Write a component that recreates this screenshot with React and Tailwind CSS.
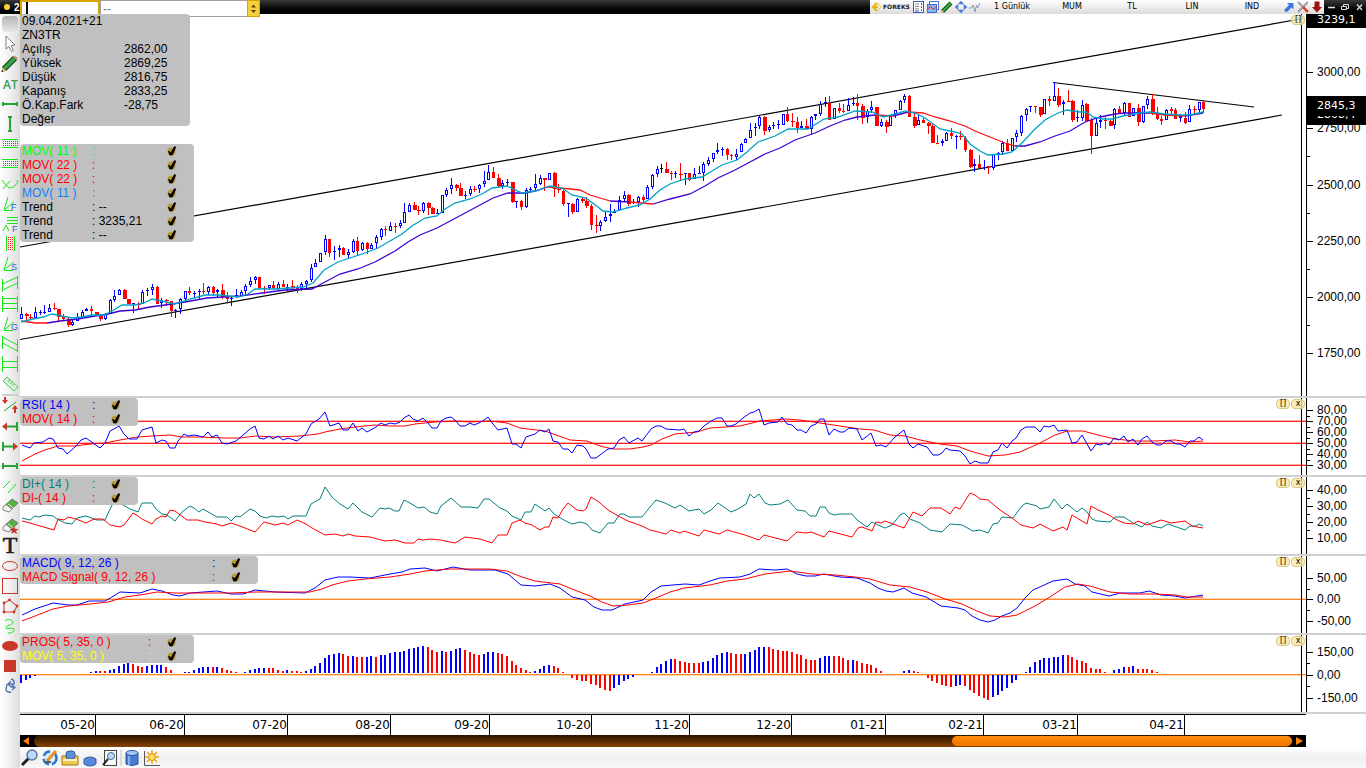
import React from 'react';

// --- CHART DATA ---
// one entry per day: direction (u = up, d = down, k = flat) then high, body top, body bottom, low
const CANDLES = `
u307,314,319,319 d313,314,316,321 d314,317,318,320 u307,312,318,318 u310,312,313,315 u305,312,313,314 u304,308,312,312 d303,308,309,310
d309,309,317,322 d314,317,319,321 d318,319,325,327 u320,322,325,326 u313,317,321,321 u310,312,317,318 u308,309,311,311 d306,309,311,315
d312,312,315,315 d316,316,319,321 u313,314,319,320 u299,300,314,314 u290,296,300,302 u289,290,295,295 d289,290,299,299 d299,299,304,304
u303,303,304,313 d302,304,305,309 u290,292,304,304 u288,290,291,296 u284,287,290,295 d286,287,304,304 u298,300,303,308 d299,300,301,306
d301,301,311,317 u309,310,311,318 u298,299,309,314 u291,291,299,302 d287,291,293,295 u291,293,294,298 u289,291,292,299 d283,291,292,294
u286,287,292,295 d286,287,293,296 u289,290,292,297 d284,290,297,299 d292,297,299,302 u296,298,299,306 u289,295,296,298 u290,292,296,296
u284,286,291,296 u277,281,285,287 u276,277,280,284 d277,277,288,289 d286,288,289,294 u285,285,288,290 d281,285,288,289 u282,284,289,290
d280,284,287,287 u284,287,288,291 d280,286,287,290 d285,287,290,293 u282,284,289,291 u280,281,284,289 u264,268,280,282 u259,263,267,267
u253,253,262,262 u235,239,252,255 d239,239,253,257 u246,251,252,260 u245,248,250,257 d247,248,255,255 u249,252,255,259 u239,241,252,253
d237,241,251,255 u242,243,250,251 d242,243,249,254 u243,245,249,249 u235,237,243,249 u228,229,237,240 d226,229,230,236 u222,226,231,231
d223,226,227,233 u220,223,226,228 u203,212,223,223 u203,205,212,212 d202,205,210,210 d206,210,211,215 u202,203,211,213 d202,203,208,215
d207,208,214,214 u209,213,214,214 u195,195,213,213 u188,190,195,197 u178,185,189,194 d184,185,188,191 d183,188,196,196 u191,195,196,199
u186,189,194,196 d186,189,190,192 u184,185,189,193 u171,181,184,187 u165,172,180,180 d167,172,178,178 d174,178,186,187 u180,183,186,189
u179,182,183,187 d182,182,202,203 u201,201,202,208 d200,201,207,210 u188,190,207,208 u187,189,190,192 u174,184,188,190 u175,178,184,185
d178,178,180,191 u173,173,180,180 d172,173,189,197 d184,189,190,193 d190,191,204,206 u203,203,204,217 d203,204,212,214 u198,199,212,212
d197,199,201,203 d197,201,206,208 d204,206,225,230 d215,225,226,233 u220,222,226,231 u212,217,221,222 u204,214,216,222 u209,211,213,213
u196,200,210,210 u191,195,199,201 d194,195,204,206 u199,202,203,204 u196,197,202,207 d195,197,200,202 u185,187,199,199 u174,175,187,189
u166,169,174,177 k164,168,169,173 d162,169,173,173 d171,173,174,180 u171,173,174,178 d163,174,175,181 u173,173,174,185 d173,173,180,181
u168,174,179,179 u166,173,174,174 u162,164,173,181 u157,160,164,166 u153,153,159,162 u143,150,152,154 u147,149,150,156 d148,149,155,160
d154,155,156,160 u149,154,157,160 u143,144,152,152 u138,139,143,143 u123,130,138,138 u123,127,128,136 u115,117,126,129 d116,117,131,135
u125,127,130,132 u122,125,126,129 u120,124,125,129 u114,114,125,125 d107,114,121,122 d113,121,122,127 d117,122,128,133 u121,126,128,128
d119,126,129,129 u116,117,129,134 u114,114,116,120 u101,104,114,116 u97,102,103,107 d96,103,120,120 u108,108,119,119 d103,108,111,113
d104,111,112,113 u98,105,111,111 u97,103,104,106 d94,103,106,120 d104,106,118,124 u109,111,117,123 u101,107,110,113 d107,107,126,126
u119,122,126,127 d120,122,127,133 u116,116,126,126 u110,110,114,118 u100,101,110,110 u94,96,100,103 d95,96,117,117 d112,117,126,128
u115,120,125,125 d118,120,123,123 d122,123,126,134 d123,126,143,143 d135,143,144,144 u139,141,143,146 u132,133,141,141 d128,133,136,139
u135,136,137,149 d131,136,137,140 d136,138,150,152 d149,150,167,168 u159,164,166,172 d155,164,168,168 u160,167,168,170 d166,166,167,174
u154,154,168,170 u152,153,154,160 u141,143,152,155 d139,143,151,151 u138,138,151,151 u130,133,137,142 u115,116,133,136 u108,109,115,121
u106,106,107,112 d106,106,107,113 d107,107,115,117 u99,99,114,114 d96,99,101,106 u82,96,101,101 d88,96,105,107 u100,102,104,115
d90,101,102,102 d100,101,120,122 u110,117,118,122 u100,105,118,121 d103,104,121,121 d118,120,136,154 u117,123,136,136 u115,120,122,128
d117,120,121,129 d120,121,126,126 u108,109,125,129 d106,109,113,113 u102,103,113,115 d103,103,117,117 u108,108,116,116 d104,108,122,126
u106,106,122,123 u96,99,105,109 d94,99,113,115 d107,113,119,120 d116,119,121,125 u109,110,120,120 d107,109,111,114 d108,110,119,119
u114,116,118,122 d112,118,123,124 u105,109,122,122 d106,109,110,113 u102,102,110,113 d101,102,109,113
`.trim().split(/\s+/);

const MOV_11 = '21,322 33,319 43,317 52,314 62,316 72,318 82,317 92,315 104,315 112,311 122,305 135,305 144,303 152,299 162,301 175,304 190,299 205,295 220,295 238,297 248,294 255,289 275,289 290,288 303,287 313,283 324,270 338,262 350,258 365,253 378,248 390,241 402,234 412,226 425,218 437,216 445,209 455,203 470,199 482,194 492,188 507,186 522,193 535,191 550,186 562,188 572,195 586,198 594,204 603,211 613,212 627,208 640,205 650,199 660,190 670,184 685,179 702,177 712,171 722,165 737,160 747,152 758,142 775,136 788,129 808,129 816,124 824,119 838,117 855,111 872,112 883,117 895,114 905,111 915,113 925,118 940,129 955,132 962,134 970,144 980,151 988,155 1003,154 1012,152 1022,143 1034,130 1045,120 1058,113 1067,110 1080,112 1086,112 1093,117 1103,119 1112,119 1123,116 1140,113 1150,112 1165,114 1180,115 1190,115 1203,112';

const MOV_22_UP = [
  '47,323 60,321 78,319 95,316 108,314 120,311 135,310 150,307 165,305 185,302 207,298 240,296 262,293 285,290 312,289 325,282 340,274 358,269 375,262 395,251 408,242 420,235 437,228 452,220 467,212 480,205 493,198 508,193 525,193 535,191 548,187',
  '610,201 630,202',
  '653,204 670,199 690,194 705,186 718,178 735,170 750,162 765,154 780,148 795,140 815,133 830,126 845,120 857,117 875,115',
  '893,116 908,112',
  '1015,146 1025,146 1040,142 1055,136 1070,131 1085,122 1100,117 1115,114 1125,113 1150,113',
  '1185,116 1203,113',
];

const MOV_22_DOWN = [
  '21,321 36,323 47,323',
  '548,187 560,188 580,190 590,195 610,201',
  '630,202 653,204',
  '875,115 893,116',
  '908,112 923,113 935,117 950,121 965,126 975,131 990,137 1005,143 1015,146',
  '1150,113 1165,115 1185,116',
];

const RSI = '22,445 30,448 34,443 43,442 49,438 53,439 58,448 63,449 67,454 75,447 81,440 86,438 93,443 100,448 105,443 110,431 114,429 119,426 124,434 129,439 137,439 142,430 152,427 156,443 162,440 166,441 170,448 175,448 178,441 184,434 188,436 194,435 199,436 203,437 208,432 212,437 217,435 222,443 227,444 236,441 242,436 250,429 255,426 259,438 264,439 269,436 273,439 278,436 283,440 288,438 297,441 306,434 311,424 319,419 325,412 330,426 339,423 343,430 348,430 353,423 358,431 362,428 367,432 376,427 381,423 385,425 390,423 395,424 400,422 404,418 409,415 413,419 418,421 423,418 428,423 432,428 437,428 441,421 446,418 451,417 455,420 460,426 465,426 470,423 474,425 479,423 484,420 488,417 493,424 498,430 507,428 512,444 516,444 521,448 526,437 535,434 540,430 545,432 549,429 553,441 558,442 563,449 568,449 572,453 577,445 583,446 586,449 591,458 596,458 604,452 608,449 614,448 619,440 624,437 629,443 638,438 642,441 651,429 656,426 661,426 666,429 680,430 684,429 689,436 694,432 699,431 704,426 711,421 717,418 722,418 727,426 731,426 736,424 743,418 750,413 754,412 759,409 764,425 769,423 778,422 782,417 787,424 792,425 797,430 801,430 806,433 811,426 816,424 820,419 824,419 829,435 834,429 840,432 844,432 849,428 857,429 862,440 866,437 871,433 876,446 881,445 886,447 895,437 904,430 909,444 913,448 918,444 927,447 933,455 938,455 942,453 946,448 950,450 960,451 965,456 970,464 975,461 980,463 988,463 993,452 998,450 1002,443 1007,448 1012,441 1016,438 1021,430 1026,427 1035,427 1040,432 1044,426 1049,427 1054,425 1058,431 1067,430 1072,443 1077,442 1082,435 1091,451 1096,444 1100,445 1105,443 1109,445 1114,438 1119,440 1124,436 1128,442 1133,439 1138,445 1142,439 1147,436 1152,442 1157,445 1161,445 1166,441 1171,441 1176,444 1180,444 1185,447 1190,441 1194,441 1199,437 1203,440';
const RSI_MOV = '22,461 35,454 45,450 58,446 75,446 90,444 105,443 120,440 137,437 152,436 170,435 182,437 200,437 225,438 240,438 255,436 275,437 300,436 318,434 325,432 340,429 355,427 375,425 390,426 405,426 415,424 435,422 455,421 470,422 490,421 507,423 520,428 545,431 570,440 587,441 600,446 613,449 630,449 643,447 651,445 662,439 675,434 697,432 710,428 740,426 760,421 785,419 800,420 820,423 840,426 860,429 874,430 890,435 905,436 920,440 940,444 957,446 970,451 988,456 1005,455 1020,452 1040,443 1055,435 1067,431 1083,431 1098,435 1115,439 1135,441 1155,441 1175,440 1190,442 1203,441';

const DI_PLUS = '22,518 30,520 35,516 39,517 45,515 53,516 57,519 65,523 72,524 77,518 86,516 97,520 105,520 112,505 118,502 130,509 138,512 142,503 152,503 156,509 162,514 167,515 175,521 182,512 190,506 194,508 199,512 203,509 210,513 217,517 227,517 231,521 236,516 240,517 250,509 255,511 260,516 266,518 272,516 278,517 284,516 288,519 293,516 306,516 311,504 320,499 325,487 332,497 340,504 348,509 353,503 362,512 372,517 380,508 385,509 389,508 395,511 399,511 404,500 410,503 418,508 424,507 430,512 437,514 441,506 446,502 451,498 461,507 470,507 478,508 484,499 489,499 500,508 507,511 512,516 521,520 525,512 531,512 535,504 545,511 549,508 554,514 562,519 572,524 580,522 587,524 592,530 600,533 608,523 614,523 620,514 624,514 629,517 642,517 650,507 656,500 665,503 675,508 680,505 689,511 699,509 704,514 711,510 718,503 731,512 738,509 746,504 750,494 754,498 759,494 765,503 770,505 780,504 788,500 797,510 805,511 810,516 816,516 820,507 825,507 829,513 834,515 840,514 852,514 857,520 867,527 872,522 878,525 885,528 892,525 900,515 904,513 910,519 920,523 930,530 942,532 950,524 962,525 973,531 980,530 988,533 993,524 998,523 1002,517 1013,518 1022,506 1026,503 1037,506 1040,509 1049,507 1054,499 1062,509 1067,504 1077,512 1082,508 1087,512 1092,519 1097,521 1110,522 1115,517 1124,517 1133,523 1142,527 1147,522 1152,526 1161,528 1168,524 1185,530 1190,526 1196,526 1199,524 1203,526';
const DI_MINUS = '22,521 30,523 40,526 54,530 58,519 64,520 68,517 76,519 86,523 94,519 103,519 110,525 120,527 124,525 133,513 138,516 142,519 152,524 156,519 162,516 166,517 170,510 175,511 187,520 198,520 205,522 217,524 222,526 231,523 240,526 255,532 264,522 275,525 283,523 288,525 297,520 306,524 312,528 325,535 335,534 343,536 348,534 355,536 370,537 385,541 395,540 405,543 414,543 418,539 423,540 430,539 440,540 455,543 465,537 480,539 492,543 498,535 507,535 512,523 520,520 525,523 532,525 540,530 545,527 549,527 553,517 558,518 563,509 568,503 577,510 583,511 586,509 591,497 599,502 608,510 620,517 628,521 642,526 650,530 666,534 671,530 680,533 684,531 699,536 704,530 719,534 727,530 745,535 759,540 764,535 787,541 797,532 806,533 811,532 824,537 829,531 852,537 858,528 862,527 872,531 876,522 881,523 885,521 904,528 913,512 922,516 930,508 941,508 950,514 955,507 960,509 970,493 975,495 980,499 988,500 1000,510 1012,518 1021,525 1033,528 1040,524 1053,531 1063,527 1067,530 1072,515 1087,524 1091,506 1096,509 1109,515 1115,519 1124,523 1133,524 1138,521 1147,525 1161,520 1171,523 1185,521 1192,526 1203,528';

const MACD = '22,615 35,609 53,603 68,605 77,605 89,601 105,601 112,597 120,592 140,593 152,589 162,591 173,595 180,596 190,593 217,591 231,594 243,594 255,590 275,592 305,593 315,588 325,580 338,577 350,577 370,578 390,574 402,572 410,569 425,568 437,571 453,567 470,570 495,570 508,574 515,580 521,585 535,586 550,584 560,588 572,597 585,600 594,607 602,610 612,610 625,604 643,600 651,592 661,586 685,584 699,585 710,581 720,578 740,577 750,574 759,569 775,570 787,569 797,574 806,576 815,576 824,574 840,577 857,578 870,583 878,588 886,591 893,592 904,588 912,593 926,597 941,606 958,608 965,610 972,616 980,620 988,622 995,620 1002,616 1010,613 1017,608 1025,598 1033,590 1042,586 1053,581 1067,579 1075,584 1085,586 1092,592 1109,596 1120,593 1140,593 1149,591 1161,595 1175,596 1185,598 1203,595';
const MACD_SIGNAL = '22,621 35,616 53,609 68,606 90,604 108,602 125,597 140,595 157,592 175,593 200,593 230,593 255,592 285,592 310,592 322,589 332,585 348,581 365,579 390,577 410,574 425,571 450,569 470,569 490,569 507,571 522,577 535,581 560,584 572,589 590,596 602,602 613,606 628,605 643,603 656,598 670,592 684,588 710,585 727,581 745,579 765,574 790,571 812,574 835,575 855,577 870,579 890,585 910,587 927,592 945,599 962,604 977,611 990,616 1005,617 1017,615 1035,606 1050,597 1065,587 1078,584 1090,586 1110,592 1130,594 1155,594 1175,595 1187,597 1203,597';

// price oscillator: b = rising bar, r = falling bar, 0 = no bar
const PROS = `
b-8 b-5 b-3 b-1 0 0 0 0 0 0 0 0 0 0 0 b1 b2 r2 r2 b3 b4 b7 b9 b10 r9 r7 r6 b7 b8 b8 b8 r6 r3 0 0 b1 b1 b3 b5 b6 b6 r6 b6 r5 r3 r2 r1 0
b1 b3 b4 b5 b5 r5 r5 r3 r2 b3 r2 r2 r1 b2 b4 b7 b10 b15 b18 b19 b20 r19 r17 b17 r16 r16 b16 b17 r16 b18 b18 b20 b21 b21 b22 b24 b25 b26 b27
r26 r23 r21 b22 r21 b22 b24 b25 r23 r21 r19 r18 b19 b21 b21 r20 r19 r17 r12 r8 r5 r3 r1 b2 b4 b7 b8 r7 r5 r1 0 r-3 r-5 r-6 r-6 r-9 r-10 r-13
r-15 r-16 b-13 b-10 b-6 b-4 b-2 0 0 0 b1 b6 b9 b12 b14 r14 r12 r11 r10 r10 r10 b11 b12 b15 b18 b20 b21 r20 r19 r19 b19 b21 b23 b26 b26 r26
r24 r23 r22 r22 r21 r19 r18 r14 r13 r13 b15 b17 b17 r17 r17 r15 r13 b13 r12 r10 r9 r8 r5 r2 0 0 0 0 b2 b3 r2 r1 0 r-3 r-6 r-8 r-10 r-11 r-12
b-11 b-10 r-11 r-15 r-18 r-21 r-23 r-25 b-22 b-20 b-16 b-13 b-8 b-5 0 b1 b6 b11 b13 b15 b15 b16 b16 b18 r18 r16 r13 r12 r10 r5 r4 r4 r1 0
b3 b4 b6 r6 b7 r4 r4 r4 r3 r1
`.trim().split(/\s+/);

const barX = (i) => Math.round(21 + i * 4.673);

// --- SMALL PARTS ---
function CheckMark({ label }) {
  return (
    <label className="flex h-3.5 w-5 items-center justify-center">
      <input type="checkbox" defaultChecked aria-label={label} className="peer sr-only" />
      <svg viewBox="0 0 10 10" className="hidden h-2.5 w-2.5 peer-checked:block">
        <circle cx="4.5" cy="5.5" r="4" fill="#b8983a" />
        <path d="M1.5 5.2 L4 6.8 L7.5 0.5 L8.8 1.2 L5.2 9 L2.8 9 Z" fill="#000" stroke="#000" strokeWidth="0.8" />
      </svg>
    </label>
  );
}

function Legend({ rows, className, cols }) {
  return (
    <div className={`absolute left-0 z-10 rounded bg-[#c0c0c0] pl-0.5 text-xs leading-3.5 ${className}`}>
      {rows.map(([name, color, value], i) => (
        <div key={i} className={`grid h-3.5 ${cols} ${color}`}>
          <span className="whitespace-nowrap">{name}</span>
          <span className="whitespace-nowrap">: {value}</span>
          <CheckMark label={name} />
        </div>
      ))}
    </div>
  );
}

function PanelButton({ children, label }) {
  return (
    <button aria-label={label} className="flex h-2.5 w-3.5 items-center justify-center rounded border border-[#d8c880] bg-[#f8e8a8]/80 font-[DejaVu_Sans,sans-serif] text-[8px] leading-none text-black">
      {children}
    </button>
  );
}

function Axis({ top, height, ticks, minor, children }) {
  const pct = (y) => `${((y - top) / height) * 100}%`;
  return (
    <div className="relative w-[60px] shrink-0 overflow-hidden border-l border-black">
      <svg className="absolute inset-0 h-full w-full" fontSize="12" fill="#000" stroke="none">
        {ticks.map(([y, label]) => (
          <g key={label}>
            <rect x="0" y={pct(y)} width="6" height="1" />
            <text x="10" y={pct(y)} dy="4">{label}</text>
          </g>
        ))}
        {minor.map((y) => <rect key={y} x="0" y={pct(y)} width="3" height="1" />)}
      </svg>
      {children}
    </div>
  );
}

function Plot({ top, height, children }) {
  return (
    <svg viewBox={`20 ${top} 1286 ${height}`} preserveAspectRatio="none" className="absolute inset-0 h-full w-full" fill="none">
      {children}
      <rect x="1301" y={top} width="1" height={height} fill="#000" />
    </svg>
  );
}

function Level({ y, color, glow = -1 }) {
  return (
    <>
      <rect x="20" y={y} width="1286" height="1" fill={color} />
      <rect x="20" y={y + glow} width="1286" height="1" fill={color} opacity="0.35" />
    </>
  );
}

function IndicatorPanel({ top, rows, legend, cols, ticks, minor, children }) {
  return (
    <section className="flex h-[79px] shrink-0 border-t-2 border-[#d0d0d0]">
      <div className="relative min-w-0 flex-1">
        <Plot top={top} height={77}>{children}</Plot>
        <Legend rows={rows} className={`top-0 ${legend}`} cols={cols} />
        <div className="absolute top-px right-px flex gap-px">
          <PanelButton label="Büyüt">[]</PanelButton>
          <PanelButton label="Kapat">x</PanelButton>
        </div>
      </div>
      <Axis top={top} height={77} ticks={ticks} minor={minor} />
    </section>
  );
}

// --- LEFT TOOLBAR ---
const LIME = '#19e619';
const GREEN = '#22a832';
const RED = '#c8372a';

const Dots = ({ x, y, cols, rows }) => (
  <g fill="#ff2020">
    {Array.from({ length: cols * rows }, (_, i) => (
      <rect key={i} x={x + (i % cols) * 2} y={y + Math.floor(i / cols) * 2} width="1" height="1" />
    ))}
  </g>
);

const Fan = ({ letter }) => (
  <>
    <path d="M8 3 L4 16 L14 8 M4 16.5 H13" stroke={LIME} />
    <text x="11" y="16" fontSize="9" fill="#2a5fd0">{letter}</text>
  </>
);

const Eraser = () => (
  <>
    <path d="M3 11 L12 3 L18 7 L9 16 Z" fill="#58b040" stroke="#777" />
    <path d="M3 11 L6 8.5 L12 13 L9 16 L3 14 Z" fill="#f4f4f4" stroke="#888" />
    <path d="M8 8 L14 12" stroke="#d8f0d0" />
  </>
);

const TOOLS = [
  ['İmleç', <path d="M6 2 V15 L9 12.5 L11.5 17.5 L13.5 16.5 L11.2 11.6 L15 11 Z" fill="#fff" stroke="#808080" />],
  ['Kalem', <><path d="M4 15 L15 4" stroke="#0d4d12" strokeWidth="6" /><path d="M4.5 14.5 L14.5 4.5" stroke="#3aa445" strokeWidth="3.5" /><path d="M1.5 18 L2.5 13 L6.5 17 Z" fill="#e8b080" /><path d="M1.5 18 L2 16 L3.5 17.5 Z" fill="#000" /><path d="M13.5 3 L15 1.5 L18 4.5 L16.5 6 Z" fill="#d88888" /></>],
  ['Metin', <text x="3" y="15" fontSize="12" fontWeight="600" fontFamily="Open Sans" fill="#3c9c50">AT</text>],
  ['Yatay', <path d="M2 10 H18 M3 8 V12 M17 8 V12" stroke={GREEN} strokeWidth="2" />],
  ['Dikey', <path d="M10 3 V17 M8 3 H12 M8 17 H12" stroke={GREEN} strokeWidth="2" />],
  ['Bant', <><path d="M2 5.5 H18 M2 13.5 H18" stroke={LIME} /><Dots x={3} y={7} cols={8} rows={3} /></>],
  ['Bant 2', <><path d="M2 5.5 H18 M2 13.5 H18" stroke={LIME} /><Dots x={3} y={7} cols={8} rows={3} /></>],
  ['Yay', <path d="M2 6 Q5 11 9 14 M3 15 L10 7 M9 14 Q16 14 18 6" stroke={LIME} />],
  ['Fibonacci yelpaze', <Fan letter="F" />],
  ['Fibonacci seviye', <><path d="M7 3.5 H18 M7 6.5 H18 M7 9.5 H18 M3 17 L6 11 L9 17" stroke={LIME} /><text x="12" y="18" fontSize="9" fill="#2a5fd0">F</text></>],
  ['Zaman bandı', <><path d="M6.5 2 V17 M14.5 2 V17" stroke={LIME} /><Dots x={8} y={3} cols={3} rows={7} /></>],
  ['Hız çizgisi', <Fan letter="S" />],
  ['Kanal', <path d="M2.5 5 V18 M17.5 2 V15 M2.5 10 L17.5 3 M2.5 16 L17.5 9" stroke={LIME} />],
  ['Izgara', <path d="M2.5 2 V18 M17.5 2 V18 M2.5 4.5 H17.5 M2.5 9.5 H17.5 M2.5 14.5 H17.5" stroke={LIME} />],
  ['Gann', <Fan letter="G" />],
  ['Ters kanal', <path d="M2.5 2 V15 M17.5 5 V18 M2.5 3 L17.5 11 M2.5 9 L17.5 17" stroke={LIME} />],
  ['Aralık', <path d="M2.5 2 V18 M17.5 2 V18 M2.5 7.5 H17.5 M2.5 13.5 H17.5" stroke={LIME} />],
  ['Cetvel', <path d="M3 7 L7 3 L18 13 L14 17 Z M8 8 L10 6 M10 10 L12 8 M12 12 L14 10" fill="#d8f4d8" stroke="#4cc45c" />],
];

const TOOLS_2 = [
  ['Sinyal', <><path d="M4 15 L16 6" stroke={GREEN} /><path d="M5 1 V5 M15 17 V13" stroke={RED} strokeWidth="2" /><path d="M2 4 H8 L5 8 Z M12 13 H18 L15 9 Z" fill={RED} /></>],
  ['Sola uzat', <><path d="M7 10.5 H17 M17 6 V15" stroke={GREEN} strokeWidth="2" /><path d="M2 10.5 L7 6.5 V14.5 Z" fill={RED} /></>],
  ['Sağa uzat', <><path d="M3 10.5 H13 M3 6 V15" stroke={GREEN} strokeWidth="2" /><path d="M18 10.5 L13 6.5 V14.5 Z" fill={RED} /></>],
  ['Parça', <path d="M3 10 H17 M3 7 V13 M17 7 V13" stroke={GREEN} strokeWidth="2" />],
  ['Paralel', <path d="M3 12 L10 5 M8 17 L16 8" stroke={LIME} />],
  ['Sil', <Eraser />],
  ['Tümünü sil', <><Eraser /><path d="M14 10 L15.3 13 L18.5 13 L16 15 L17 18 L14 16.2 L11 18 L12 15 L9.5 13 L12.7 13 Z" fill={RED} /></>],
  ['Yazı', <text x="10" y="17" textAnchor="middle" fontSize="24" fontFamily="Liberation Serif" stroke="#222" strokeWidth="0.6" fill="#222">T</text>],
  ['Elips', <ellipse cx="10" cy="10" rx="7.5" ry="4.5" stroke={RED} />],
  ['Dikdörtgen', <rect x="2.5" y="2.5" width="15" height="15" stroke={RED} />],
  ['Çokgen', <><path d="M4 7 L9.5 4 L17 10 L14 16 L4 16 Z" stroke={RED} /><g fill={RED}><circle cx="4" cy="7" r="1.4" /><circle cx="9.5" cy="4" r="1.4" /><circle cx="17" cy="10" r="1.4" /><circle cx="14" cy="16" r="1.4" /><circle cx="4" cy="16" r="1.4" /></g></>],
  ['Serbest', <path d="M5 5 C8 2 14 4 13 7 C12 9 6 9 6 12 C6 14 12 11 14 13 C15 15 12 17 8 17" stroke={LIME} />],
  ['Dolu elips', <ellipse cx="10" cy="10" rx="8" ry="5" fill={RED} />],
  ['Dolu kare', <rect x="4" y="4" width="12" height="12" fill={RED} />],
  ['Yenile', <path d="M11 3 Q15 4 14 8 H8 M11 5 L8 8 L11 11 M7 8 L6 14 Q7 17 11 16 M11 11 H15 M12 9 L15 11.5 L12 14" stroke="#4a70b0" strokeWidth="1.3" />],
];

function Tool({ label, icon }) {
  return (
    <button aria-label={label} className="h-5 w-5 shrink-0">
      <svg viewBox="0 0 20 20" className="h-5 w-5 overflow-visible" fill="none">{icon}</svg>
    </button>
  );
}

function LeftToolbar() {
  return (
    <nav className="flex w-5 shrink-0 flex-col bg-linear-to-r from-white via-[#f0f0f0] to-[#dcdcdc]">
      <div className="flex h-5 shrink-0 items-center justify-center">
        <div className="h-4 w-4 rounded bg-linear-to-b from-[#b4b4b4] to-[#e8e8e8]" />
      </div>
      {TOOLS.map(([label, icon]) => <Tool key={label} label={label} icon={icon} />)}
      <hr className="mx-0.5 h-0.5 shrink-0 border-0 bg-[#cfcfcf]" />
      {TOOLS_2.map(([label, icon]) => <Tool key={label} label={label} icon={icon} />)}
    </nav>
  );
}

// --- TOP BAR ---
const HEADER_ICONS = [
  ['Tablo', <><rect x="1.5" y="1.5" width="10" height="11" fill="#fff" stroke="#3060c0" /><path d="M3 4 H7 M3 6.5 H7 M3 9 H7" stroke="#888" /><path d="M9.5 3 V5 M9.5 6 V8" stroke="#d03030" /><path d="M9.5 9 V11 M3 11 H7" stroke="#3060c0" /></>],
  ['Grafik', <><rect x="3.5" y="1.5" width="9" height="8" fill="#fff" stroke="#4070d0" /><rect x="1.5" y="4.5" width="9" height="8" fill="#8ab0f0" stroke="#4070d0" /><path d="M2 9 Q4 5 6 8 T11 6" stroke="#d03030" /></>],
  ['Çiz', <><path d="M2.5 11.5 L11 3" stroke="#0d4d12" strokeWidth="4" /><path d="M3 11 L11 3" stroke="#3ab045" strokeWidth="2" /><path d="M1 13 L2 10 L4 12 Z" fill="#e8b080" /></>],
  ['Taşı', <path d="M7 1 L9.5 4 H4.5 Z M7 13 L9.5 10 H4.5 Z M1 7 L4 4.5 V9.5 Z M13 7 L10 4.5 V9.5 Z" fill="#5088e0" stroke="#3060c0" strokeWidth="0.5" />],
  ['Sinyal', <path d="M1 8 H3.5 L5 5 L7 12 L8.5 5 L9.5 8 L12 3" stroke="#8098b8" />],
];

const RIGHT_ICONS = [
  ['Ayır', <path d="M2 10 L7 5 L5 3 H11.5 V9.5 L9.5 7.5 L4.5 12.5 Z" fill="#3a78e0" />],
  ['Ayarlar', <><path d="M2 2 L8 8 M12 2 L2 12" stroke="#999" strokeWidth="1.8" /><path d="M7 7 L12 12" stroke="#e04030" strokeWidth="2.5" /></>],
  ['İndir', <path d="M4.5 1.5 H9.5 V7 H12 L7 12.5 L2 7 H4.5 Z" fill="#a01010" />],
];

function HeaderIcon({ label, icon }) {
  return (
    <button aria-label={label} className="h-3.5 w-3.5">
      <svg viewBox="0 0 14 14" className="h-3.5 w-3.5" fill="none">{icon}</svg>
    </button>
  );
}

function TopBar() {
  return (
    <header className="flex h-3.5 shrink-0 justify-between bg-linear-to-b from-[#3a3a3a] to-black">
      <div className="flex h-[17px]">
        <div className="flex h-3.5 w-5 items-center gap-1 overflow-hidden pl-1 text-[10px] font-bold text-white">
          <span className="h-1.5 w-1.5 shrink-0 rounded-full bg-[#ffd030]" />
          2
        </div>
        <div className="relative">
          <input aria-label="Sembol" className="block h-[17px] w-20 border-2 border-[#d9a300] bg-white px-1 text-xs outline-none" />
          <span className="absolute top-0.5 left-1.5 h-3 w-0.5 bg-black" />
        </div>
        <div className="relative">
          <select aria-label="Şablon" className="block h-[17px] w-40 appearance-none border border-[#a8a0a0] bg-white pl-0.5 text-xs leading-3.5 text-gray-500">
            <option>--</option>
          </select>
          <svg viewBox="0 0 13 17" className="pointer-events-none absolute top-0 right-0 h-[17px] w-[13px]">
            <rect x="0.5" y="0.5" width="12" height="16" fill="#f6cf3c" stroke="#d9a300" />
            <path d="M4 7.5 L6.5 4.5 L9 7.5 Z M4 10 L6.5 13 L9 10 Z" fill="#5a4200" />
          </svg>
        </div>
      </div>
      <div className="flex font-[DejaVu_Sans,sans-serif] text-[8px] leading-3.5 text-black">
        <div className="flex bg-linear-to-b from-white to-[#dcdcdc]">
          <svg viewBox="0 0 42 14" className="h-3.5 w-[42px]" fill="none">
            <path d="M7 3 L3 7 L7 11 M3 7 H8" stroke="#f0b400" strokeWidth="2" />
            <path d="M8 3.5 L11 7 L8 10.5" stroke="#f0b400" strokeWidth="1" strokeDasharray="2 1" />
            <text x="13" y="9" fontSize="6" fontWeight="bold" fill="#222">FOREKS</text>
          </svg>
          {HEADER_ICONS.map(([label, icon]) => <HeaderIcon key={label} label={label} icon={icon} />)}
          {['1 Günlük', 'MUM', 'TL', 'LIN', 'IND'].map((item) => (
            <button key={item} className="w-15">{item}</button>
          ))}
          {RIGHT_ICONS.map(([label, icon]) => <HeaderIcon key={label} label={label} icon={icon} />)}
        </div>
        <HeaderIcon label="Küçült" icon={<path d="M4 7.5 H11" stroke="#ddd" strokeWidth="1.5" />} />
        <HeaderIcon label="Pencere" icon={<path d="M3.5 6.5 H8.5 V9.5 H3.5 Z M5.5 6 V4.5 H10.5 V8.5 H9" stroke="#ddd" />} />
        <HeaderIcon label="Kapat" icon={<path d="M5 4.5 L10 10 M10 4.5 L5 10" stroke="#ddd" strokeWidth="1.3" />} />
      </div>
    </header>
  );
}

// --- PRICE CHART ---
function Candle({ code, x }) {
  const [high, top, bottom, low] = code.slice(1).split(',').map(Number);
  const color = { u: '#0000ff', d: '#ff0000', k: '#000000' }[code[0]];
  const h = Math.max(bottom - top, 1);
  return (
    <g fill={color}>
      <rect x={x} y={high} width="1" height={Math.max(low - high, 1)} />
      <rect x={x - 1} y={top} width={code[0] === 'd' ? 4 - (x % 2) : 3} height={h} />
      {code[0] === 'u' && h > 2 && <rect x={x} y={top + 1} width="1" height={h - 2} fill="#fff" />}
    </g>
  );
}

function PricePanel() {
  const prices = [
    ['Açılış', '2862,00'],
    ['Yüksek', '2869,25'],
    ['Düşük', '2816,75'],
    ['Kapanış', '2833,25'],
    ['Ö.Kap.Fark', '-28,75'],
    ['Değer', ''],
  ];
  return (
    <section className="flex min-h-60 flex-1">
      <div className="relative min-w-0 flex-1">
        <Plot top={14} height={382}>
          <g stroke="#000" strokeWidth="1.2">
            <path d="M20 247 L1303 18.5 M20 339.5 L1282 115 M1053 82.5 L1254 107" />
          </g>
          <g shapeRendering="crispEdges">
            {CANDLES.map((code, i) => <Candle key={i} code={code} x={barX(i)} />)}
          </g>
          <g strokeWidth="1.3">
            {MOV_22_UP.map((p) => <polyline key={p} points={p} stroke="#4000d0" />)}
            {MOV_22_DOWN.map((p) => <polyline key={p} points={p} stroke="#ff1010" />)}
            <polyline points={MOV_11} stroke="#00a0c8" />
          </g>
        </Plot>

        <div className="absolute top-0 left-0 z-10 w-[170px] rounded bg-[#c0c0c0] pl-0.5 text-xs leading-3.5">
          <div>09.04.2021+21</div>
          <div>ZN3TR</div>
          <table>
            <tbody>
              {prices.map(([name, value]) => (
                <tr key={name} className="h-3.5">
                  <th scope="row" className="w-[102px] p-0 text-left font-normal">{name}</th>
                  <td className="p-0">{value}</td>
                </tr>
              ))}
            </tbody>
          </table>
        </div>

        <Legend
          className="top-[130px] w-[174px]"
          cols="grid-cols-[70px_70px_20px]"
          rows={[
            ['MOV( 11 )', 'text-[#00ff00]'],
            ['MOV( 22 )', 'text-[#ff0000]'],
            ['MOV( 22 )', 'text-[#ff0000]'],
            ['MOV( 11 )', 'text-[#1080ff]'],
            ['Trend', 'text-black', '--'],
            ['Trend', 'text-black', '3235,21'],
            ['Trend', 'text-black', '--'],
          ]}
        />
        <div className="absolute top-px right-px">
          <PanelButton label="Büyüt">[]</PanelButton>
        </div>
      </div>
      <Axis
        top={14}
        height={382}
        ticks={[[72, '3000,00'], [128, '2750,00'], [185, '2500,00'], [241, '2250,00'], [297, '2000,00'], [353, '1750,00']]}
        minor={[156, 213, 269, 325]}
      >
        <div className="absolute inset-x-0 top-0 h-full font-[DejaVu_Sans,sans-serif] text-[11px] leading-5 text-white">
          <div className="absolute inset-x-0 top-0 h-3.5 bg-black pl-2.5 leading-3">3239,1</div>
          <div className="absolute inset-x-0 top-[91px] bg-black pl-2.5">2808,4</div>
          <div className="absolute inset-x-0 top-[82px] bg-black pl-2.5">2845,3</div>
        </div>
      </Axis>
    </section>
  );
}

// --- BOTTOM ---
const MONTHS = ['05-20', '06-20', '07-20', '08-20', '09-20', '10-20', '11-20', '12-20', '01-21', '02-21', '03-21', '04-21'];

function TimeAxis() {
  return (
    <div className="flex h-[23px] shrink-0 border-t-2 border-[#d0d0d0]">
      <div className="grid flex-1 grid-cols-[76fr_89fr_103fr_103fr_99fr_102fr_98fr_102fr_94fr_98fr_94fr_107fr_121fr] border-t border-black pb-px font-[DejaVu_Sans,sans-serif] text-xs leading-5">
        {MONTHS.map((m) => <div key={m} className="border-r border-black text-right">{m}</div>)}
      </div>
      <div className="w-[60px]" />
    </div>
  );
}

function ScrollBar() {
  return (
    <div className="flex h-3 shrink-0 pr-[60px]">
      <div className="flex flex-1 bg-black">
        <button aria-label="Geri" className="w-3.5">
          <svg viewBox="0 0 14 12" className="h-3 w-3.5"><path d="M3 6 L9 2 V10 Z" fill="#ff8000" /></svg>
        </button>
        <div className="flex flex-1 justify-end rounded-full bg-linear-to-b from-[#2a1400] to-[#8a4400]">
          <div className="my-px w-[27%] rounded-md bg-linear-to-b from-[#ff8c10] to-[#ee7400]" />
        </div>
        <button aria-label="İleri" className="w-3.5">
          <svg viewBox="0 0 14 12" className="h-3 w-3.5"><path d="M11 6 L4 2 V10 Z" fill="#ff8000" /></svg>
        </button>
      </div>
    </div>
  );
}

const BOTTOM_TOOLS = [
  ['Ara', <><path d="M2 17 L9 10" stroke="#222" strokeWidth="3" /><circle cx="12" cy="7" r="5" fill="#b8dcff" stroke="#607898" strokeWidth="1.5" /></>],
  ['Yenile', <><circle cx="10" cy="10" r="6.5" fill="#d8ecff" stroke="#2a78c8" strokeWidth="2.5" strokeDasharray="8 3" /><path d="M7 13 L16 3" stroke="#e89020" strokeWidth="3" /><path d="M6 14 H11" stroke="#333" strokeWidth="1.5" /></>],
  ['Aç', <><path d="M2 8 H18 V17 H2 Z" fill="#f0c850" stroke="#a07818" /><rect x="6" y="3" width="9" height="8" rx="3" fill="#6090d8" stroke="#3058a0" /><path d="M3 12 H17" stroke="#fff4c0" strokeWidth="2" /></>],
  ['Kaydet', <path d="M4 11 Q10 7 16 11 V16 Q10 20 4 16 Z" fill="#5888d8" stroke="#3058a8" />],
  ['İncele', <><rect x="4.5" y="2.5" width="12" height="15" fill="#f8f8f8" stroke="#444" /><path d="M3 17 L8 11" stroke="#222" strokeWidth="2" /><circle cx="11" cy="8" r="3.5" fill="#b8dcff" stroke="#506888" /></>],
  ['Veri', <><path d="M4 5 V16 Q10 19 16 16 V5" fill="#4a7cd0" stroke="#2a50a0" /><ellipse cx="10" cy="5" rx="6" ry="2.5" fill="#a8c8f4" stroke="#2a50a0" /><path d="M7 8 V17" stroke="#88b0f0" strokeWidth="2" /></>],
  ['Tema', <><path d="M2.5 3 V17.5 H18" stroke="#556" /><path d="M10 2 V16 M3 9 H17 M5 4 L15 14 M15 4 L5 14" stroke="#f0a818" strokeWidth="1.5" /><circle cx="10" cy="9" r="3.5" fill="#ffe060" stroke="#e09010" /></>],
];

function BottomToolbar() {
  return (
    <footer className="flex h-[21px] shrink-0 items-center bg-linear-to-b from-white via-[#f0f0f0] to-[#f8f8f8]">
      {BOTTOM_TOOLS.slice(0, 5).map(([label, icon]) => <Tool key={label} label={label} icon={icon} />)}
      <span className="h-4 w-0.5 bg-[#dcdcdc]" />
      {BOTTOM_TOOLS.slice(5).map(([label, icon]) => <Tool key={label} label={label} icon={icon} />)}
    </footer>
  );
}

export default function App() {
  return (
    <div className="flex min-h-screen flex-col bg-white font-[Liberation_Sans,Arial,sans-serif] text-black">
      <TopBar />
      <div className="flex flex-1">
        <LeftToolbar />
        <main className="flex min-w-0 flex-1 flex-col">
          <PricePanel />

          <IndicatorPanel
            top={398}
            legend="w-[118px]"
            cols="grid-cols-[70px_14px_20px]"
            rows={[['RSI( 14 )', 'text-[#0000ff]'], ['MOV( 14 )', 'text-[#ff0000]']]}
            ticks={[[410, '80,00'], [421, '70,00'], [432, '60,00'], [443, '50,00'], [454, '40,00'], [465, '30,00']]}
            minor={[416, 427, 438, 449, 460]}
          >
            <Level y={421} color="#ff2020" />
            <Level y={443} color="#ff2020" />
            <Level y={465} color="#ff2020" />
            <polyline points={RSI_MOV} stroke="#ff0000" />
            <polyline points={RSI} stroke="#0000ff" />
          </IndicatorPanel>

          <IndicatorPanel
            top={477}
            legend="w-[118px]"
            cols="grid-cols-[70px_14px_20px]"
            rows={[['DI+( 14 )', 'text-[#008080]'], ['DI-( 14 )', 'text-[#ff0000]']]}
            ticks={[[490, '40,00'], [506, '30,00'], [522, '20,00'], [538, '10,00']]}
            minor={[498, 514, 530]}
          >
            <polyline points={DI_PLUS} stroke="#008080" />
            <polyline points={DI_MINUS} stroke="#ff0000" />
          </IndicatorPanel>

          <IndicatorPanel
            top={556}
            legend="w-[238px]"
            cols="grid-cols-[190px_14px_20px]"
            rows={[['MACD( 9, 12, 26 )', 'text-[#0000ff]'], ['MACD Signal( 9, 12, 26 )', 'text-[#ff0000]']]}
            ticks={[[578, '50,00'], [599, '0,00'], [621, '-50,00']]}
            minor={[589, 610]}
          >
            <Level y={599} color="#ff8820" />
            <polyline points={MACD} stroke="#0000ff" />
            <polyline points={MACD_SIGNAL} stroke="#ff0000" />
          </IndicatorPanel>

          <IndicatorPanel
            top={635}
            legend="w-[174px]"
            cols="grid-cols-[126px_14px_20px]"
            rows={[['PROS( 5, 35, 0 )', 'text-[#ff0000]'], ['MOV( 5, 35, 0 )', 'text-[#ffff00]']]}
            ticks={[[652, '150,00'], [675, '0,00'], [698, '-150,00']]}
            minor={[663, 686]}
          >
            <Level y={674} color="#ff8820" glow={1} />
            <g shapeRendering="crispEdges">
              {PROS.map((code, i) => {
                const v = Number(code.slice(1));
                if (!v) return null;
                return <rect key={i} x={barX(i) - 1} y={v > 0 ? 673 - v : 675} width="2" height={Math.abs(v)} fill={code[0] === 'b' ? '#0000ff' : '#ff0000'} />;
              })}
            </g>
          </IndicatorPanel>

          <TimeAxis />
          <ScrollBar />
          <BottomToolbar />
        </main>
      </div>
    </div>
  );
}
